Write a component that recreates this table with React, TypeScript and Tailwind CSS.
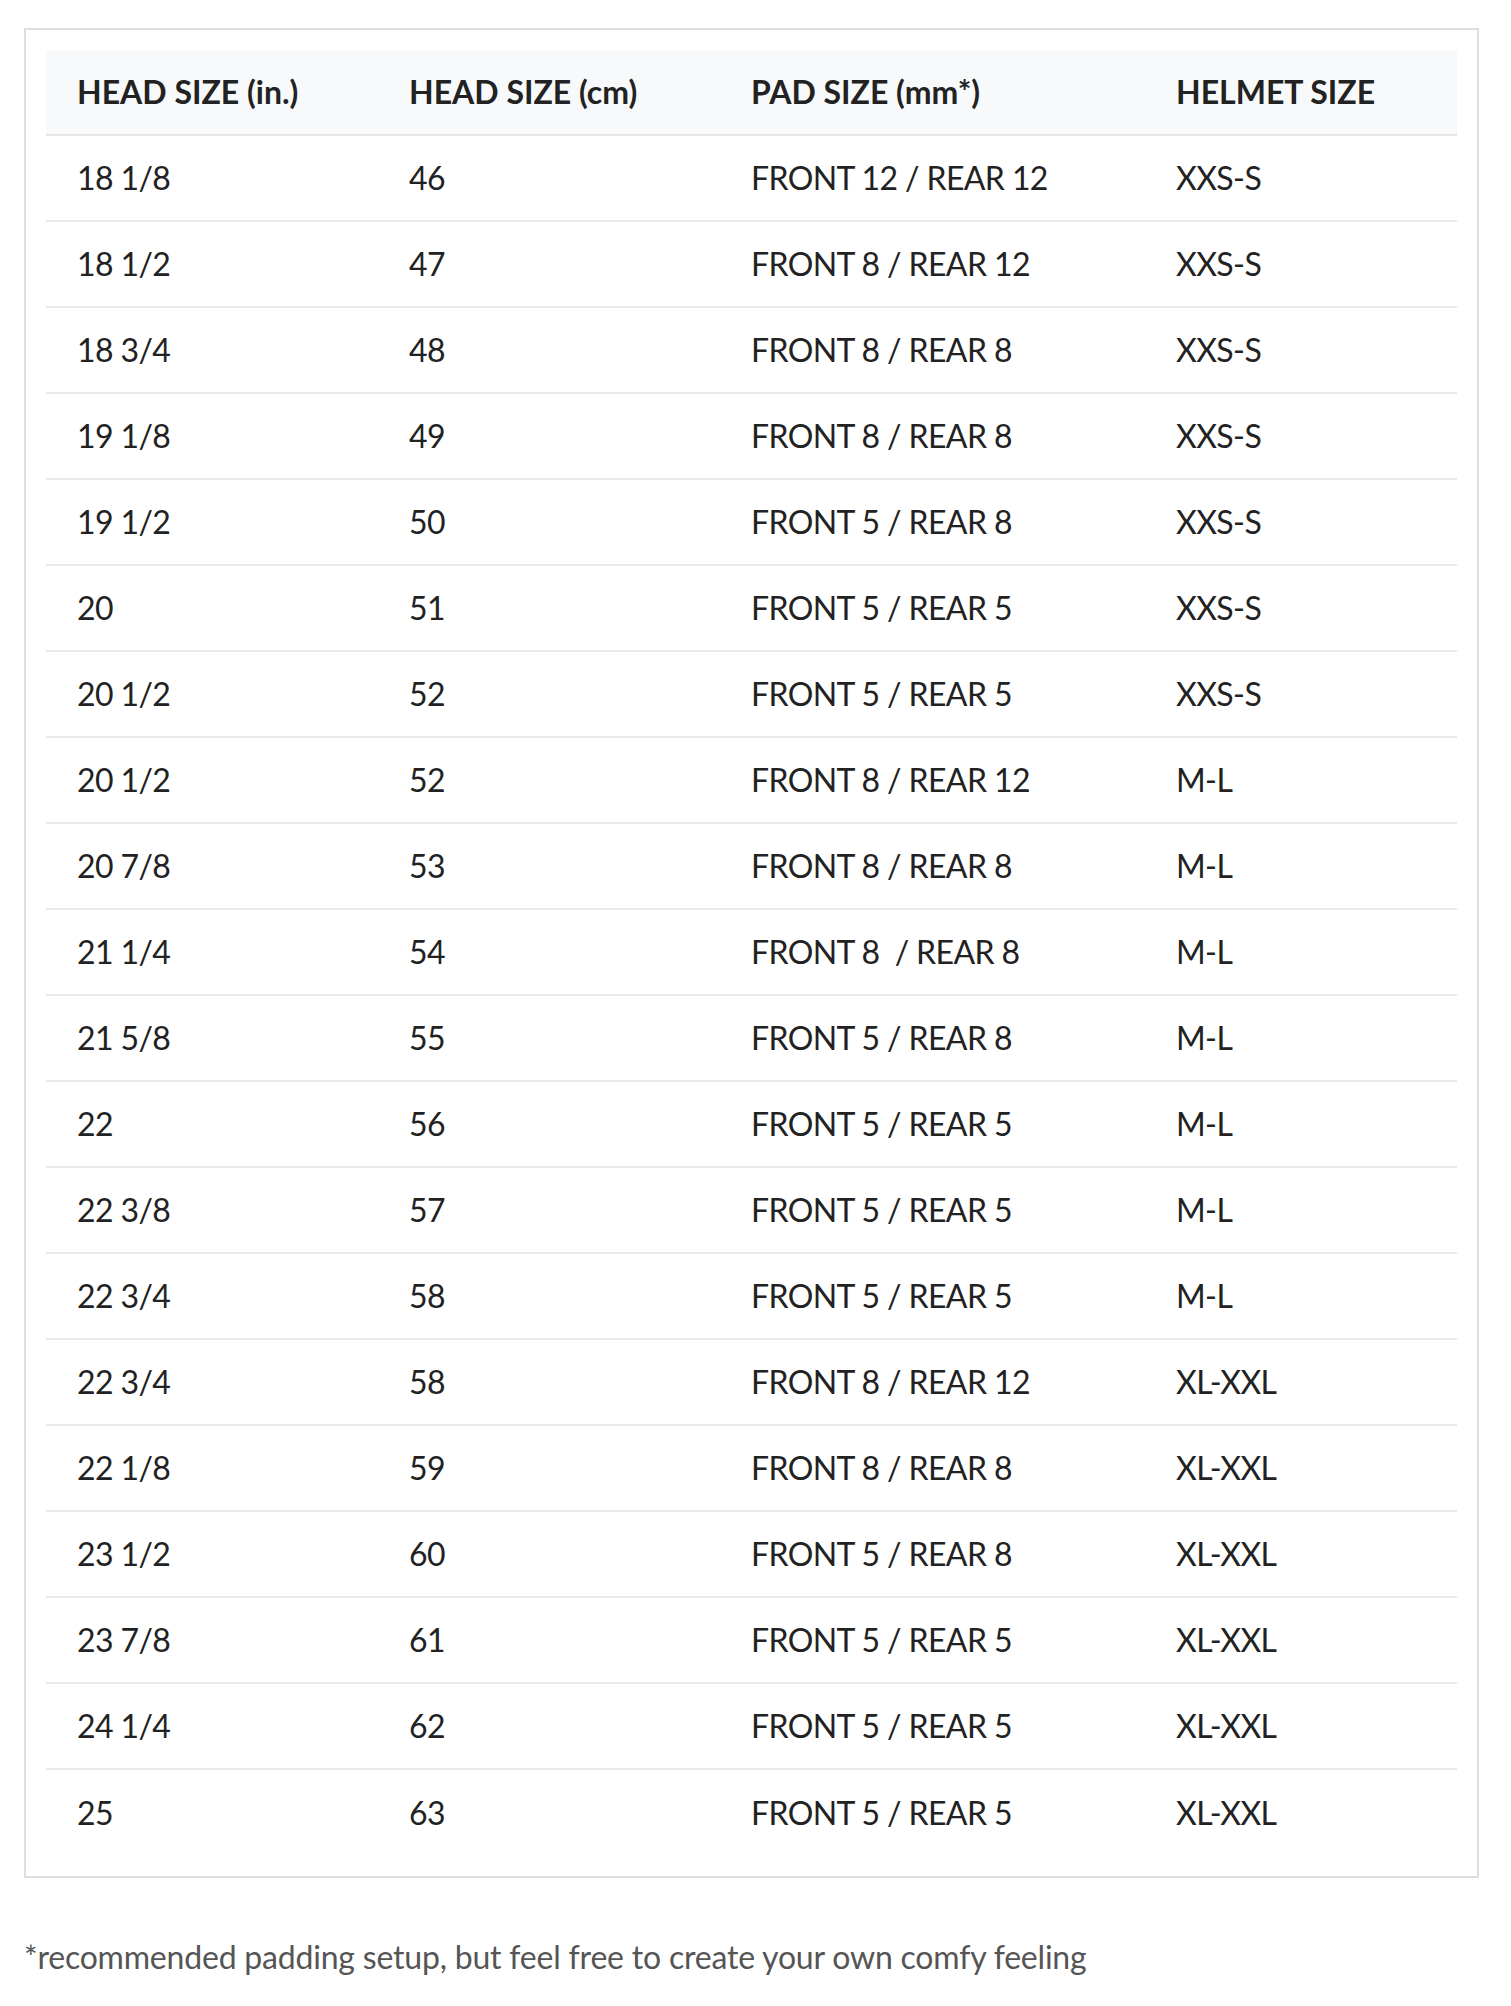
const rows: [string, string, string, string][] = [
  ["18 1/8", "46", "FRONT 12 / REAR 12", "XXS-S"],
  ["18 1/2", "47", "FRONT 8 / REAR 12", "XXS-S"],
  ["18 3/4", "48", "FRONT 8 / REAR 8", "XXS-S"],
  ["19 1/8", "49", "FRONT 8 / REAR 8", "XXS-S"],
  ["19 1/2", "50", "FRONT 5 / REAR 8", "XXS-S"],
  ["20", "51", "FRONT 5 / REAR 5", "XXS-S"],
  ["20 1/2", "52", "FRONT 5 / REAR 5", "XXS-S"],
  ["20 1/2", "52", "FRONT 8 / REAR 12", "M-L"],
  ["20 7/8", "53", "FRONT 8 / REAR 8", "M-L"],
  ["21 1/4", "54", "FRONT 8\u00a0 / REAR 8", "M-L"],
  ["21 5/8", "55", "FRONT 5 / REAR 8", "M-L"],
  ["22", "56", "FRONT 5 / REAR 5", "M-L"],
  ["22 3/8", "57", "FRONT 5 / REAR 5", "M-L"],
  ["22 3/4", "58", "FRONT 5 / REAR 5", "M-L"],
  ["22 3/4", "58", "FRONT 8 / REAR 12", "XL-XXL"],
  ["22 1/8", "59", "FRONT 8 / REAR 8", "XL-XXL"],
  ["23 1/2", "60", "FRONT 5 / REAR 8", "XL-XXL"],
  ["23 7/8", "61", "FRONT 5 / REAR 5", "XL-XXL"],
  ["24 1/4", "62", "FRONT 5 / REAR 5", "XL-XXL"],
  ["25", "63", "FRONT 5 / REAR 5", "XL-XXL"],
];

const headers = ["HEAD SIZE (in.)", "HEAD SIZE (cm)", "PAD SIZE (mm*)", "HELMET SIZE"];

export default function App() {
  return (
    <div className="min-h-screen bg-white pt-[28px] pl-[24px] font-['Lato',sans-serif] text-[32px] text-[#222222]">
      {/* size chart */}
      <div className="w-[1455px] border-2 border-[#dedede] p-5">
        <div className="grid h-[86px] grid-cols-[332px_342px_425px_1fr] items-center border-b-2 border-[#e6e6e6] bg-[#f8f9fa] font-bold">
          {headers.map((h) => (
            <div key={h} className="pl-[31px] leading-[48px]">
              {h}
            </div>
          ))}
        </div>
        {rows.map((r, i) => (
          <div
            key={i}
            className={`grid h-[86px] grid-cols-[332px_342px_425px_1fr] items-center ${
              i < rows.length - 1 ? "border-b-2 border-[#e9e9e9]" : ""
            }`}
          >
            {r.map((c, j) => (
              <div key={j} className="whitespace-pre pl-[31px] leading-[48px] tracking-[-0.6px]">
                {c}
              </div>
            ))}
          </div>
        ))}
      </div>

      <p className="mt-[55px] leading-[48px] tracking-[-0.2px] text-[#555555]">
        *recommended padding setup, but feel free to create your own comfy feeling
      </p>
    </div>
  );
}
